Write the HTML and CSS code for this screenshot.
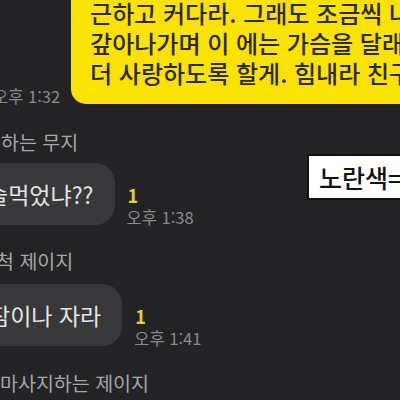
FILE: index.html
```html
<!DOCTYPE html>
<html lang="ko">
<head>
<meta charset="utf-8">
<link rel="stylesheet" href="styles.css">
</head>
<body>
<div class="chat">
  <div class="row-me">
    <span class="time time-me">오후 1:32</span>
    <div class="bubble-me">
      <div>근하고 커다라. 그래도 조금씩 나</div>
      <div>갚아나가며 이 에는 가슴을 달래</div>
      <div>더 사랑하도록 할게. 힘내라 친구</div>
    </div>
  </div>

  <div class="name name-1">하는 무지</div>
  <div class="row-you">
    <div class="bubble-you b1">술먹었냐??</div>
    <div class="meta">
      <span class="unread">1</span>
      <span class="time">오후 1:38</span>
    </div>
  </div>

  <div class="name name-2">척 제이지</div>
  <div class="row-you">
    <div class="bubble-you b2">잠이나 자라</div>
    <div class="meta">
      <span class="unread">1</span>
      <span class="time">오후 1:41</span>
    </div>
  </div>

  <div class="name name-3">마사지하는 제이지</div>

  <div class="label">노란색=</div>
</div>
</body>
</html>
```

FILE: styles.css
```css
html, body {
  margin: 0;
  padding: 0;
  background: #232326;
}

.chat {
  position: relative;
  width: 400px;
  height: 400px;
  overflow: hidden;
  background: #232326;
  font-family: "Noto Sans CJK KR", "Noto Sans", sans-serif;
  display: flex;
  flex-direction: column;
}

.row-me {
  display: flex;
  align-items: flex-end;
  margin-top: -16px;
  margin-left: -7px;
  gap: 11px;
}

.time {
  font-size: 16.5px;
  line-height: 20px;
  color: #8a8a8d;
  white-space: nowrap;
}

.time-me {
  margin-bottom: -2px;
}

.bubble-me {
  flex: none;
  width: 400px;
  background: #fae300;
  border-radius: 15px;
  padding: 14px 0 16px 19px;
  font-size: 24px;
  font-weight: 500;
  line-height: 30px;
  color: #2a2818;
  white-space: nowrap;
}

.name {
  font-size: 19.5px;
  line-height: 22px;
  color: #a6a6a9;
  white-space: nowrap;
}

.name-1 {
  margin-top: 27px;
  margin-left: 1px;
}

.name-2 {
  margin-top: 25px;
  margin-left: -4px;
}

.name-3 {
  margin-top: 26px;
  margin-left: 0;
}

.row-you {
  display: flex;
  align-items: flex-end;
  gap: 12px;
}

.bubble-you {
  flex: none;
  background: #38383b;
  border-radius: 20px;
  padding: 16px 21px 16px 16px;
  font-size: 23px;
  line-height: 30px;
  color: #e4e4e6;
  white-space: nowrap;
}

.b1 {
  margin-top: 10px;
  margin-left: -29px;
}

.b2 {
  margin-top: 12px;
  margin-left: -27px;
}

.meta {
  display: flex;
  flex-direction: column;
  align-items: flex-start;
  gap: 2px;
  margin-bottom: -2px;
}

.unread {
  font-size: 18px;
  line-height: 20px;
  font-weight: bold;
  color: #e6d42a;
  margin-left: 1px;
}

.label {
  position: absolute;
  left: 307px;
  top: 154px;
  width: 120px;
  height: 46px;
  box-sizing: border-box;
  background: #ffffff;
  border: 2px solid #111111;
  padding-left: 10px;
  font-size: 25px;
  font-weight: 500;
  line-height: 42px;
  color: #111111;
  white-space: nowrap;
}
```
